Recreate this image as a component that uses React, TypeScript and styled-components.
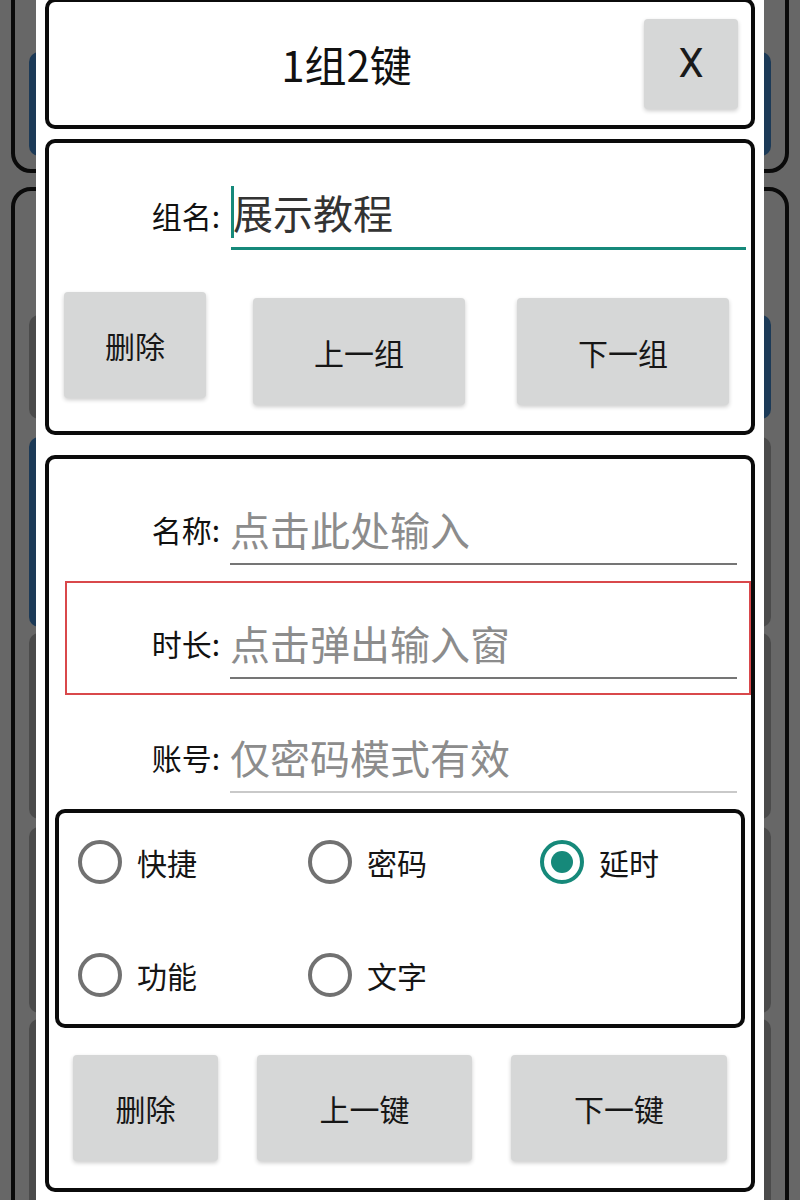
import React from 'react';
import styled, { createGlobalStyle } from 'styled-components';

const TEAL = '#16897a';

const GlobalStyle = createGlobalStyle`
  html, body {
    margin: 0;
    padding: 0;
  }
  body {
    font-family: "Noto Sans CJK SC", "Noto Sans", sans-serif;
    background: #676767;
  }
`;

// 整个屏幕
const Screen = styled.div`
  position: relative;
  width: 800px;
  height: 1200px;
  overflow: hidden;
  background: #676767;
`;

// 弹窗后面被遮住的页面
const Backdrop = styled.div`
  display: flex;
  flex-direction: column;
  gap: 14px;
  padding: 0 11px;
`;

const BackPanel = styled.div<{ $top?: boolean }>`
  box-sizing: border-box;
  border: 4px solid #0a0a0a;
  display: flex;
  flex-direction: column;
  border-radius: ${p => (p.$top ? '0 0 20px 20px' : '20px 20px 0 0')};
  margin-top: ${p => (p.$top ? '-20px' : '0')};
  height: ${p => (p.$top ? '193px' : '1100px')};
  padding: ${p => (p.$top ? '68px 14px 0' : '124px 14px 0')};
`;

const BackRow = styled.div<{ $h: number; $mt?: number }>`
  display: flex;
  gap: 20px;
  height: ${p => p.$h}px;
  margin-top: ${p => p.$mt || 0}px;
`;

const BackKey = styled.div<{ $color: string }>`
  flex: 1;
  border-radius: 10px;
  background: ${p => p.$color};
`;

// 弹窗
const Dialog = styled.div`
  position: absolute;
  top: 0;
  left: 36px;
  width: 728px;
  height: 1200px;
  box-sizing: border-box;
  padding: 0 9px;
  background: #fff;
  display: flex;
  flex-direction: column;
`;

const Card = styled.div`
  box-sizing: border-box;
  border: 4px solid #0b0b0b;
  border-radius: 10px;
  background: #fff;
`;

const HeaderCard = styled(Card)`
  margin-top: -2px;
  height: 131px;
  display: flex;
  align-items: center;
  padding-right: 13px;
`;

const Title = styled.div`
  flex: 1;
  text-align: center;
  font-size: 42px;
  color: #111;
`;

const GrayButton = styled.button<{ $w: number; $h: number; $mt?: number }>`
  flex: none;
  width: ${p => p.$w}px;
  height: ${p => p.$h}px;
  margin-top: ${p => p.$mt || 0}px;
  border: none;
  border-radius: 4px;
  background: #d6d7d7;
  box-shadow: 0 2px 4px rgba(0, 0, 0, 0.2);
  font-family: inherit;
  font-size: 30px;
  color: #161616;
  padding: 0;
  cursor: pointer;
`;

const CloseButton = styled(GrayButton)`
  font-size: 40px;
  font-family: "Roboto", "Noto Sans", sans-serif;
  color: #1a1a1a;
`;

const GroupCard = styled(Card)`
  margin-top: 10px;
  height: 296px;
  padding-top: 37px;
`;

const GroupRow = styled.div`
  display: flex;
  align-items: center;
  height: 70px;
`;

const Label = styled.div<{ $w: number }>`
  flex: none;
  width: ${p => p.$w}px;
  text-align: right;
  font-size: 30px;
  color: #111;
`;

const GroupInput = styled.div`
  flex: 1;
  margin: 0 5px 0 11px;
  height: 70px;
  box-sizing: border-box;
  border-bottom: 3px solid ${TEAL};
  padding-bottom: 4px;
  display: flex;
  align-items: center;
  font-size: 40px;
  color: #333;
`;

const Caret = styled.span`
  display: inline-block;
  width: 3px;
  height: 52px;
  background: ${TEAL};
  margin-right: -1px;
`;

const ButtonRow = styled.div<{ $mt: number; $pl: number }>`
  display: flex;
  align-items: flex-start;
  margin-top: ${p => p.$mt}px;
  padding-left: ${p => p.$pl}px;
`;

const KeyCard = styled(Card)`
  margin-top: 20px;
  height: 737px;
`;

const Fields = styled.div`
  padding: 8px 0 0 16px;
`;

const FieldRow = styled.div<{ $highlight?: boolean }>`
  box-sizing: border-box;
  height: 114px;
  border: 2px solid ${p => (p.$highlight ? '#d9484b' : 'transparent')};
  display: flex;
  align-items: flex-end;
  padding-bottom: 14px;
`;

const FieldLabel = styled(Label)`
  height: 56px;
  margin-bottom: 8px;
  display: flex;
  align-items: center;
  justify-content: flex-end;
`;

const FieldInput = styled.div<{ $line: string }>`
  box-sizing: border-box;
  margin-left: 10px;
  width: 507px;
  height: 64px;
  border-bottom: 2px solid ${p => p.$line};
  padding-bottom: 6px;
  display: flex;
  align-items: center;
  font-size: 40px;
  color: #8c8c8c;
`;

const RadioCard = styled(Card)`
  margin: 0 6px;
  height: 219px;
  display: grid;
  grid-template-columns: 230px 232px auto;
  grid-template-rows: 98px 98px;
  row-gap: 15px;
  padding-left: 19px;
`;

const RadioItem = styled.label`
  display: flex;
  align-items: center;
  gap: 15px;
  cursor: pointer;
`;

const RadioCircle = styled.span<{ $checked?: boolean }>`
  box-sizing: border-box;
  width: 44px;
  height: 44px;
  border-radius: 50%;
  border: 4px solid ${p => (p.$checked ? TEAL : '#717171')};
  display: flex;
  align-items: center;
  justify-content: center;

  &::after {
    content: '';
    display: ${p => (p.$checked ? 'block' : 'none')};
    width: 22px;
    height: 22px;
    border-radius: 50%;
    background: ${TEAL};
  }
`;

const RadioText = styled.span`
  font-size: 30px;
  color: #151515;
`;

const fields = [
  { label: '名称:', hint: '点击此处输入', line: '#757575' },
  { label: '时长:', hint: '点击弹出输入窗', line: '#757575', highlight: true },
  { label: '账号:', hint: '仅密码模式有效', line: '#c9c9c9' },
];

const modes = ['快捷', '密码', '延时', '功能', '文字'];

const App: React.FC = () => {
  const selected = '延时';
  return (
    <Screen>
      <GlobalStyle />
      <Backdrop>
        <BackPanel $top>
          <BackRow $h={104}>
            <BackKey $color="#1c3a57" />
          </BackRow>
        </BackPanel>
        <BackPanel>
          <BackRow $h={104}>
            <BackKey $color="#4b4b4b" />
            <BackKey $color="#1c3a57" />
          </BackRow>
          <BackRow $h={190} $mt={18}>
            <BackKey $color="#1c3a57" />
            <BackKey $color="#4b4b4b" />
          </BackRow>
          <BackRow $h={186} $mt={6}>
            <BackKey $color="#4b4b4b" />
            <BackKey $color="#4b4b4b" />
          </BackRow>
          <BackRow $h={186} $mt={8}>
            <BackKey $color="#4b4b4b" />
            <BackKey $color="#4b4b4b" />
          </BackRow>
          <BackRow $h={200} $mt={6}>
            <BackKey $color="#4b4b4b" />
            <BackKey $color="#4b4b4b" />
          </BackRow>
        </BackPanel>
      </Backdrop>

      <Dialog>
        <HeaderCard>
          <Title>1组2键</Title>
          <CloseButton $w={94} $h={90}>X</CloseButton>
        </HeaderCard>

        <GroupCard>
          <GroupRow>
            <Label $w={171}>组名:</Label>
            <GroupInput>
              <Caret />
              展示教程
            </GroupInput>
          </GroupRow>
          <ButtonRow $mt={42} $pl={15}>
            <GrayButton $w={142} $h={106}>删除</GrayButton>
            <GrayButton $w={212} $h={107} $mt={6} style={{ marginLeft: 47 }}>上一组</GrayButton>
            <GrayButton $w={212} $h={107} $mt={6} style={{ marginLeft: 52 }}>下一组</GrayButton>
          </ButtonRow>
        </GroupCard>

        <KeyCard>
          <Fields>
            {fields.map(f => (
              <FieldRow key={f.label} $highlight={f.highlight}>
                <FieldLabel $w={153}>{f.label}</FieldLabel>
                <FieldInput $line={f.line}>{f.hint}</FieldInput>
              </FieldRow>
            ))}
          </Fields>

          <RadioCard>
            {modes.map(m => (
              <RadioItem key={m}>
                <RadioCircle $checked={m === selected} />
                <RadioText>{m}</RadioText>
              </RadioItem>
            ))}
          </RadioCard>

          <ButtonRow $mt={27} $pl={24}>
            <GrayButton $w={145} $h={106}>删除</GrayButton>
            <GrayButton $w={215} $h={106} style={{ marginLeft: 39 }}>上一键</GrayButton>
            <GrayButton $w={216} $h={106} style={{ marginLeft: 39 }}>下一键</GrayButton>
          </ButtonRow>
        </KeyCard>
      </Dialog>
    </Screen>
  );
};

export default App;
